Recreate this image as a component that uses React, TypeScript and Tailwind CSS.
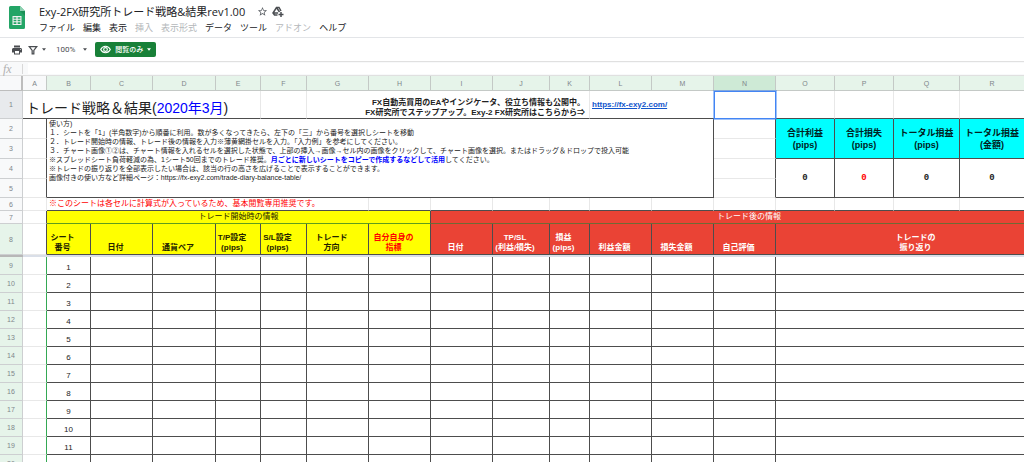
import React from "react";

interface ColumnProps {
  name: string;
  width: string;
}

interface HeadingProps {
  lines: string[];
  className: string;
  span?: number;
}

const columns: ColumnProps[] = [
  { name: "A", width: "w-[24px]" },
  { name: "B", width: "w-[44px]" },
  { name: "C", width: "w-[62px]" },
  { name: "D", width: "w-[63px]" },
  { name: "E", width: "w-[45px]" },
  { name: "F", width: "w-[46px]" },
  { name: "G", width: "w-[62px]" },
  { name: "H", width: "w-[62px]" },
  { name: "I", width: "w-[62px]" },
  { name: "J", width: "w-[57px]" },
  { name: "K", width: "w-[40px]" },
  { name: "L", width: "w-[62px]" },
  { name: "M", width: "w-[62px]" },
  { name: "N", width: "w-[62px]" },
  { name: "O", width: "w-[59px]" },
  { name: "P", width: "w-[59px]" },
  { name: "Q", width: "w-[66px]" },
  { name: "R", width: "w-[65px]" },
  { name: "S", width: "w-auto" },
];

const menus = [
  { label: "ファイル" },
  { label: "編集" },
  { label: "表示" },
  { label: "挿入", disabled: true },
  { label: "表示形式", disabled: true },
  { label: "データ" },
  { label: "ツール" },
  { label: "アドオン", disabled: true },
  { label: "ヘルプ" },
];

const totals = [
  { label: "合計利益", unit: "(pips)", color: "text-[#222222]" },
  { label: "合計損失", unit: "(pips)", color: "text-[#ff0000]" },
  { label: "トータル損益", unit: "(pips)", color: "text-[#222222]" },
  { label: "トータル損益", unit: "(金額)", color: "text-[#222222]" },
];

const before = "bg-[#ffff00] text-[#222200]";
const after = "bg-[#ea4335] text-white";

const headings: HeadingProps[] = [
  { lines: ["シート", "番号"], className: before },
  { lines: ["日付"], className: before },
  { lines: ["通貨ペア"], className: before },
  { lines: ["T/P設定", "(pips)"], className: before },
  { lines: ["S/L設定", "(pips)"], className: before },
  { lines: ["トレード", "方向"], className: before },
  { lines: ["自分自身の", "指標"], className: "bg-[#ffff00] text-[#ff0000]" },
  { lines: ["日付"], className: after },
  { lines: ["TP/SL", "(利益/損失)"], className: after },
  { lines: ["損益", "(pips)"], className: after },
  { lines: ["利益金額"], className: after },
  { lines: ["損失金額"], className: after },
  { lines: ["自己評価"], className: after },
  { lines: ["トレードの", "振り返り"], className: after, span: 5 },
];

const trades = [1, 2, 3, 4, 5, 6, 7, 8, 9, 10, 11, 12];

const grid = "border-r border-b border-[#e8e8e8]";
const solid = "border-r border-b border-[#4d4d4d]";
const solidRight = "border-r border-b border-r-[#4d4d4d] border-b-[#e8e8e8]";
const solidBottom = "border-r border-b border-r-[#e8e8e8] border-b-[#4d4d4d]";

function RowNumber({ n, className }: { n: number; className: string }) {
  return (
    <th
      scope="row"
      className={`border-r border-b border-[#cdcfd1] text-[7px] leading-none font-normal text-[#80868b] ${className}`}
    >
      {n}
    </th>
  );
}

function Caret() {
  return (
    <svg viewBox="0 0 6 4" className="w-[4px] h-[3px]" fill="currentColor">
      <path d="M0 0h6L3 4z" />
    </svg>
  );
}

function Header() {
  return (
    <header className="flex h-[38px] border-b border-[#e3e5e8] pl-2 pt-1">
      <svg viewBox="0 0 18 25" className="w-[18px] h-[25px] mt-px shrink-0">
        <path
          d="M2.5 1H12l5 5v16.5a1.5 1.5 0 0 1-1.5 1.5h-13A1.5 1.5 0 0 1 1 22.500v-20A1.500 1.500 0 0 1 2.500 1z"
          fill="#23a566"
        />
        <path d="M12 1l5 5h-5z" fill="#8ed1b1" />
        <path d="M12 6h5v5z" fill="#1c8f57" />
        <path
          d="M4.500 11h9v9h-9zM5.600 12.200v1.600h2.800v-1.600zM9.600 12.200v1.600h2.800v-1.600zM5.600 14.800v1.500h2.800v-1.500zM9.600 14.800v1.500h2.800v-1.500zM5.600 17.300v1.600h2.800v-1.600zM9.600 17.300v1.600h2.800v-1.600z"
          fill="#f1f1f1"
          fillRule="evenodd"
        />
      </svg>
      <div className="ml-[13px]">
        <div className="flex items-center gap-1 h-[15px]">
          <h1 className="text-[11px] leading-none text-[#202124] mr-2 whitespace-nowrap font-['Open_Sans','Noto_Sans_CJK_JP',sans-serif]">
            Exy-2FX研究所トレード戦略&amp;結果rev1.00
          </h1>
          <button type="button" aria-label="スター">
            <svg viewBox="0 0 24 24" className="w-[11px] h-[11px]" fill="#5f6368">
              <path d="M22 9.240l-7.190-.62L12 2 9.190 8.630 2 9.240l5.460 4.730L5.820 21 12 17.270 18.180 21l-1.630-7.030L22 9.240zM12 15.400l-3.760 2.270 1-4.280-3.320-2.880 4.380-.38L12 6.100l1.710 4.040 4.380.38-3.320 2.880 1 4.280L12 15.400z" />
            </svg>
          </button>
          <button type="button" aria-label="ドライブに追加">
            <svg
              viewBox="0 0 24 24"
              className="w-[12px] h-[12px]"
              fill="none"
              stroke="#4a4d51"
              strokeWidth="3"
            >
              <path d="M11 18H5l-3-4L9 3h5l4 7M9 3l6 9M3 14h9" />
              <path d="M18 12v10M13 17h10" />
            </svg>
          </button>
        </div>
        <nav className="flex gap-2 mt-[3px]">
          {menus.map((menu) => (
            <button
              key={menu.label}
              type="button"
              disabled={menu.disabled}
              className="text-[9px] leading-3 whitespace-nowrap text-[#202124] disabled:text-[#b4b7ba]"
            >
              {menu.label}
            </button>
          ))}
        </nav>
      </div>
    </header>
  );
}

function Toolbar() {
  return (
    <div className="flex items-center h-6 border-b border-[#e0e0e0] pl-[11px] text-[#4a4d51]">
      <button type="button" aria-label="印刷">
        <svg viewBox="0 0 24 24" className="w-[12px] h-[12px]" fill="currentColor">
          <path d="M19 8H5c-1.660 0-3 1.340-3 3v6h4v4h12v-4h4v-6c0-1.660-1.340-3-3-3zm-3 11H8v-5h8v5zm3-7c-.55 0-1-.45-1-1s.45-1 1-1 1 .45 1 1-.45 1-1 1zm-1-9H6v4h12V3z" />
        </svg>
      </button>
      <button type="button" aria-label="フィルタ" className="flex items-center gap-1 ml-[5px]">
        <svg
          viewBox="0 0 24 24"
          className="w-[10px] h-[10px]"
          fill="none"
          stroke="currentColor"
          strokeWidth="3"
        >
          <path d="M3 4h18l-7 9v8h-4v-8z" />
        </svg>
        <Caret />
      </button>
      <button
        type="button"
        className="flex items-center gap-2 ml-[10px] text-[8px] font-[Roboto,sans-serif]"
      >
        100%
        <Caret />
      </button>
      <button
        type="button"
        className="flex items-center gap-1 h-[15px] ml-2 px-[5px] rounded-xs bg-[#188038] text-white text-[7px] leading-none font-medium whitespace-nowrap"
      >
        <svg
          viewBox="0 0 24 24"
          className="w-[11px] h-[11px]"
          fill="none"
          stroke="currentColor"
          strokeWidth="2.500"
        >
          <path d="M1.500 12C4 7 7.500 5 12 5s8 2 10.500 7c-2.500 5-6 7-10.500 7S4 17 1.500 12z" />
          <circle cx="12" cy="12" r="4" />
        </svg>
        閲覧のみ
        <Caret />
      </button>
    </div>
  );
}

function FormulaBar() {
  return (
    <div className="flex items-center h-[14px] bg-[#f8f9fa] border-b border-[#e0e0e0]">
      <label
        htmlFor="formula"
        className="w-[23px] pl-[3px] text-[12px] leading-[10px] italic text-[#b0b0b0] border-r border-[#d8d8d8] font-['Liberation_Serif',serif]"
      >
        fx
      </label>
      <input id="formula" type="text" className="flex-1 h-[11px] ml-[5px] bg-white outline-none" />
    </div>
  );
}

function Instructions() {
  return (
    <div className="pl-[2px] text-[7px] leading-[9px] text-[#222222] whitespace-nowrap">
      <p>使い方)</p>
      <p>１．シートを「1」(半角数字)から順番に利用。数が多くなってきたら、左下の「三」から番号を選択しシートを移動</p>
      <p>２．トレード開始時の情報、トレード後の情報を入力※薄黄網掛セルを入力。「入力例」を参考にしてください。</p>
      <p>
        ３．チャート画像①②は、チャート情報を入れるセルを選択した状態で、上部の挿入→画像→セル内の画像をクリックして、チャート画像を選択。またはドラッグ＆ドロップで投入可能
      </p>
      <p>
        ※スプレッドシート負荷軽減の為、1シート50回までのトレード推奨。
        <span className="font-bold text-[#0000ff]">
          月ごとに新しいシートをコピーで作成するなどして活用
        </span>
        してください。
      </p>
      <p>※トレードの振り返りを全部表示したい場合は、該当の行の高さを広げることで表示することができます。</p>
      <p>画像付きの使い方など詳細ページ：https://fx-exy2.com/trade-diary-balance-table/</p>
    </div>
  );
}

function Sheet() {
  return (
    <table className="table-fixed w-full min-w-[1068px] border-separate border-spacing-0 [&_td]:p-0">
      <colgroup>
        <col className="w-[23px]" />
        {columns.map((column) => (
          <col key={column.name} className={column.width} />
        ))}
      </colgroup>
      <thead>
        <tr className="h-[15px]">
          <td className="border-r-2 border-b border-[#bdbdbd] bg-[#f8f9fa]" />
          {columns.map(({ name }) => (
            <th
              key={name}
              scope="col"
              className={`p-0 border-r border-b border-[#c4c9c6] text-[7px] leading-none font-normal text-[#80868b] ${
                name === "A" ? "bg-[#f8f9fa]" : name === "N" ? "bg-[#ceead6]" : "bg-[#e6f4ea]"
              }`}
            >
              {name}
            </th>
          ))}
        </tr>
      </thead>
      <tbody>
        <tr className="h-7">
          <RowNumber n={1} className="p-0 bg-[#e8eaed]" />
          <td
            colSpan={5}
            className={`${solidBottom} align-bottom text-[14px] leading-5 text-[#222222] whitespace-nowrap`}
          >
            <h2 className="pl-[3px]">
              トレード戦略＆結果(<span className="text-[#0000ff]">2020年3月</span>)
            </h2>
          </td>
          <td className={solidBottom} />
          <td
            colSpan={5}
            className={`${solidBottom} align-bottom text-right text-[8px] leading-[10px] font-bold text-[#222222] whitespace-nowrap`}
          >
            <p className="pr-1">FX自動売買用のEAやインジケータ、役立ち情報も公開中。</p>
            <p className="pr-1">FX研究所でステップアップ。Exy-2 FX研究所はこちらから⇒</p>
          </td>
          <td
            colSpan={2}
            className="border-b border-[#4d4d4d] text-[8px] leading-none font-bold whitespace-nowrap"
          >
            <a href="https://fx-exy2.com/" className="pl-[2px] text-[#1155cc] underline">
              https://fx-exy2.com/
            </a>
          </td>
          <td className="border border-[#4285f4] outline outline-[#4285f4]/50" />
          {columns.slice(14).map((column) => (
            <td key={column.name} className={solidBottom} />
          ))}
        </tr>
        <tr className="h-5">
          <RowNumber n={2} className="p-0 bg-[#f8f9fa]" />
          <td className={solidRight} />
          <td colSpan={12} rowSpan={4} className={`${solid} align-top`}>
            <Instructions />
          </td>
          <td className={solidRight} />
          {totals.map((total, i) => (
            <th
              key={i}
              scope="col"
              rowSpan={2}
              className={`${solid} p-0 bg-[#00ffff] text-[9px] leading-3 font-bold text-[#002222] whitespace-nowrap`}
            >
              {total.label}
              <br />
              {total.unit}
            </th>
          ))}
          <td className={grid} />
        </tr>
        <tr className="h-5">
          <RowNumber n={3} className="p-0 bg-[#f8f9fa]" />
          <td className={solidRight} />
          <td className={solidRight} />
          <td className={grid} />
        </tr>
        <tr className="h-5">
          <RowNumber n={4} className="p-0 bg-[#f8f9fa]" />
          <td className={solidRight} />
          <td className={solidRight} />
          {totals.map((total, i) => (
            <td
              key={i}
              rowSpan={2}
              className={`${solid} text-center text-[9px] leading-none font-bold font-['Liberation_Mono',monospace] ${total.color}`}
            >
              0
            </td>
          ))}
          <td className={grid} />
        </tr>
        <tr className="h-[19px]">
          <RowNumber n={5} className="p-0 bg-[#f8f9fa]" />
          <td className={solidRight} />
          <td className={solidRight} />
          <td className={grid} />
        </tr>
        <tr className="h-[13px]">
          <RowNumber n={6} className="p-0 bg-[#f8f9fa]" />
          <td className={grid} />
          <td
            colSpan={6}
            className={`${solidBottom} text-[8px] leading-3 text-[#ff0000] whitespace-nowrap`}
          >
            <p className="pl-[2px]">
              ※このシートは各セルに計算式が入っているため、基本閲覧専用推奨です。
            </p>
          </td>
          {columns.slice(7).map((column) => (
            <td key={column.name} className={solidBottom} />
          ))}
        </tr>
        <tr className="h-[13px] text-[8px] leading-3">
          <RowNumber n={7} className="p-0 bg-[#f8f9fa]" />
          <td className={solidRight} />
          <th
            colSpan={7}
            className="p-0 border-r border-b border-r-[#4d4d4d] border-b-[#5f9c1c] bg-[#ffff00] font-normal text-[#222200]"
          >
            トレード開始時の情報
          </th>
          <th
            colSpan={11}
            className="p-0 border-r border-b border-r-[#4d4d4d] border-b-[#6f6a35] bg-[#ea4335] font-normal text-white"
          >
            トレード後の情報
          </th>
        </tr>
        <tr className="h-[31px]">
          <RowNumber n={8} className="p-0 bg-[#e6f4ea]" />
          <td className={solidRight} />
          {headings.map((heading, i) => (
            <th
              key={i}
              scope="col"
              colSpan={heading.span}
              className={`${solid} p-0 pr-3 pb-px align-bottom text-[8px] leading-[10px] font-bold whitespace-nowrap ${heading.className}`}
            >
              {heading.lines.map((line) => (
                <p key={line}>{line}</p>
              ))}
            </th>
          ))}
        </tr>
        <tr className="h-[2px]">
          <td className="bg-[#b7b7b7]" />
          <td colSpan={19} className="bg-[#dadfe8]" />
        </tr>
        {trades.map((trade) => (
          <tr key={trade} className="h-[18px]">
            <RowNumber n={trade + 8} className="p-0 bg-[#e6f4ea]" />
            <td className="border-r border-b border-r-[#34a853] border-b-[#e8e8e8]" />
            <td
              className={`${solid} align-bottom text-center text-[8px] leading-3 text-[#222222]`}
            >
              {trade}
            </td>
            {headings.slice(1).map((heading, i) => (
              <td key={i} colSpan={heading.span} className={solid} />
            ))}
          </tr>
        ))}
      </tbody>
    </table>
  );
}

function App() {
  return (
    <div className="h-screen overflow-hidden bg-white font-['Liberation_Sans','Noto_Sans_CJK_JP',sans-serif]">
      <Header />
      <Toolbar />
      <FormulaBar />
      <Sheet />
    </div>
  );
}

export default App;
